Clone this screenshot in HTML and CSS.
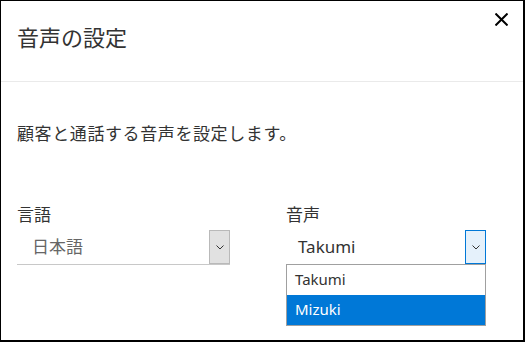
FILE: index.html
```html
<!DOCTYPE html>
<html lang="ja">
<head>
  <meta charset="UTF-8" />
  <title>音声の設定</title>
  <link rel="stylesheet" href="styles.css">
</head>
<body>

<div class="dialog">
  <div class="dialog-head">
    <div class="dialog-title">音声の設定</div>
    <button class="close-btn" aria-label="閉じる">
      <svg width="13" height="13" viewBox="0 0 13 13"><path d="M0.5 0.5 L12.5 12.5 M12.5 0.5 L0.5 12.5" stroke="#000" stroke-width="2" fill="none"/></svg>
    </button>
  </div>

  <div class="dialog-body">
    <p class="intro">顧客と通話する音声を設定します。</p>

    <div class="fields">
      <div class="field">
        <div class="label">言語</div>
        <div class="select">
          <span class="value muted">日本語</span>
          <span class="arrow">
            <svg width="8" height="5" viewBox="0 0 8 5"><polyline points="0.5,0.5 4,4 7.5,0.5" fill="none" stroke="#333" stroke-width="1"/></svg>
          </span>
        </div>
      </div>

      <div class="field">
        <div class="label">音声</div>
        <div class="select open">
          <span class="value">Takumi</span>
          <span class="arrow">
            <svg width="8" height="5" viewBox="0 0 8 5"><polyline points="0.5,0.5 4,4 7.5,0.5" fill="none" stroke="#333" stroke-width="1"/></svg>
          </span>
          <ul class="options">
            <li>Takumi</li>
            <li class="selected">Mizuki</li>
          </ul>
        </div>
      </div>
    </div>
  </div>
</div>

</body>
</html>
```

FILE: styles.css
```css
* { box-sizing: border-box; }
body {
  margin: 0;
  background: #fff;
  font-family: "Noto Sans", "Noto Sans CJK JP", sans-serif;
  color: #333;
}

.dialog {
  width: 525px;
  height: 342px;
  border: 1px solid #000;
  border-right-width: 2px;
  border-bottom-width: 2px;
}

.dialog-head {
  height: 81px;
  border-bottom: 1px solid #eaeaea;
  display: flex;
  justify-content: space-between;
  align-items: flex-start;
  padding: 12px 15px 0 16px;
}

.dialog-title {
  margin-top: 9px;
  font-size: 22px;
  line-height: 30px;
  color: #333;
}

.close-btn {
  border: none;
  background: none;
  padding: 0;
  margin: 0;
  width: 13px;
  height: 13px;
  cursor: pointer;
  display: block;
}
.close-btn svg { display: block; }

.dialog-body { padding: 0 16px; }

.intro {
  margin: 40px 0 0;
  font-size: 17px;
  line-height: 24px;
  letter-spacing: 0.6px;
  color: #333;
}

.fields {
  display: grid;
  grid-template-columns: 213px 200px;
  column-gap: 56px;
  margin-top: 57px;
}

.label {
  font-size: 17px;
  line-height: 24px;
  color: #333;
  margin-bottom: 3px;
}

.select {
  position: relative;
  height: 35px;
  display: flex;
  align-items: flex-start;
  border-bottom: 1px solid #c8c8c8;
}
.select.open { border-bottom-color: transparent; }

.select .value {
  flex: 1;
  padding-left: 12px;
  font-size: 17px;
  line-height: 34px;
  color: #333;
}
.select .value.muted { color: #666; padding-left: 15px; }

.arrow {
  width: 21px;
  height: 34px;
  border: 1px solid #b9b9b9;
  background: #e1e1e1;
  display: flex;
  align-items: center;
  justify-content: center;
}
.select.open .arrow {
  border-color: #0078d7;
  background: #e5f1fb;
}
.arrow svg { display: block; }

.options {
  position: absolute;
  left: 0;
  top: 34px;
  width: 200px;
  margin: 0;
  padding: 0;
  list-style: none;
  border: 1px solid #a0a0a0;
  background: #fff;
}
.options li {
  height: 30px;
  line-height: 29px;
  padding-left: 8px;
  font-size: 15px;
  color: #333;
}
.options li.selected {
  background: #0078d7;
  color: #fff;
}
```
